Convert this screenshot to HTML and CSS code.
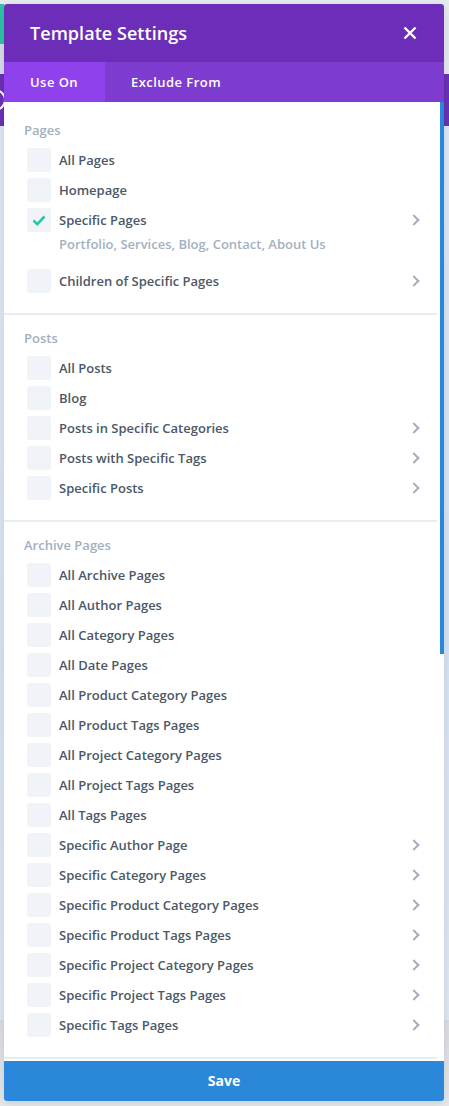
FILE: index.html
```html
<!DOCTYPE html>
<html lang="en">
<head>
<meta charset="utf-8">
<title>Template Settings</title>
<link rel="stylesheet" href="styles.css">
</head>
<body>
<div class="backdrop">
  <div class="bd-top"></div>
  <div class="bd-bar"><span class="bd-ring"></span></div>
  <div class="bd-main"></div>
  <div class="bd-foot"></div>
</div>

<div class="modal">
  <header class="modal-head">
    <h1 class="modal-title">Template Settings</h1>
    <button class="close" aria-label="Close">
      <svg width="14" height="14" viewBox="0 0 14 14"><path d="M1.5 1.5l11 11M12.5 1.5l-11 11" stroke="#fff" stroke-width="2.4" stroke-linecap="butt"/></svg>
    </button>
  </header>
  <nav class="tabs">
    <span class="tab active">Use On</span>
    <span class="tab">Exclude From</span>
  </nav>

  <div class="modal-body">
    <div class="content">
      <section class="group">
        <h2 class="group-label">Pages</h2>
        <ul class="options">
          <li class="option"><span class="box"></span><span class="name">All Pages</span></li>
          <li class="option"><span class="box"></span><span class="name">Homepage</span></li>
          <li class="option-wrap">
            <div class="option"><span class="box checked"><svg width="14" height="11" viewBox="0 0 14 11"><path d="M1.5 5.5l3.8 3.6L12.5 1.5" fill="none" stroke="#29c4a9" stroke-width="2.6"/></svg></span><span class="name">Specific Pages</span><span class="chev"></span></div>
            <div class="detail">Portfolio, Services, Blog, Contact, About Us</div>
          </li>
          <li class="option"><span class="box"></span><span class="name">Children of Specific Pages</span><span class="chev"></span></li>
        </ul>
      </section>

      <section class="group">
        <h2 class="group-label">Posts</h2>
        <ul class="options">
          <li class="option"><span class="box"></span><span class="name">All Posts</span></li>
          <li class="option"><span class="box"></span><span class="name">Blog</span></li>
          <li class="option"><span class="box"></span><span class="name">Posts in Specific Categories</span><span class="chev"></span></li>
          <li class="option"><span class="box"></span><span class="name">Posts with Specific Tags</span><span class="chev"></span></li>
          <li class="option"><span class="box"></span><span class="name">Specific Posts</span><span class="chev"></span></li>
        </ul>
      </section>

      <section class="group">
        <h2 class="group-label">Archive Pages</h2>
        <ul class="options">
          <li class="option"><span class="box"></span><span class="name">All Archive Pages</span></li>
          <li class="option"><span class="box"></span><span class="name">All Author Pages</span></li>
          <li class="option"><span class="box"></span><span class="name">All Category Pages</span></li>
          <li class="option"><span class="box"></span><span class="name">All Date Pages</span></li>
          <li class="option"><span class="box"></span><span class="name">All Product Category Pages</span></li>
          <li class="option"><span class="box"></span><span class="name">All Product Tags Pages</span></li>
          <li class="option"><span class="box"></span><span class="name">All Project Category Pages</span></li>
          <li class="option"><span class="box"></span><span class="name">All Project Tags Pages</span></li>
          <li class="option"><span class="box"></span><span class="name">All Tags Pages</span></li>
          <li class="option"><span class="box"></span><span class="name">Specific Author Page</span><span class="chev"></span></li>
          <li class="option"><span class="box"></span><span class="name">Specific Category Pages</span><span class="chev"></span></li>
          <li class="option"><span class="box"></span><span class="name">Specific Product Category Pages</span><span class="chev"></span></li>
          <li class="option"><span class="box"></span><span class="name">Specific Product Tags Pages</span><span class="chev"></span></li>
          <li class="option"><span class="box"></span><span class="name">Specific Project Category Pages</span><span class="chev"></span></li>
          <li class="option"><span class="box"></span><span class="name">Specific Project Tags Pages</span><span class="chev"></span></li>
          <li class="option"><span class="box"></span><span class="name">Specific Tags Pages</span><span class="chev"></span></li>
        </ul>
      </section>
    </div>
    <div class="scroll-track"><div class="scroll-thumb"></div></div>
  </div>

  <button class="save">Save</button>
</div>
</body>
</html>
```

FILE: styles.css
```css
* { box-sizing: border-box; }

html, body {
  margin: 0;
  padding: 0;
  width: 449px;
  height: 1106px;
  overflow: hidden;
}

body {
  position: relative;
  font-family: "Open Sans", "Noto Sans", sans-serif;
  background: #e4e8ec;
}

/* page underneath the dialog */
.backdrop {
  display: flex;
  flex-direction: column;
  height: 1106px;
}
.bd-top {
  height: 74px;
  background:
    linear-gradient(#2ec4a9, #2ec4a9) 0 4px / 4px 40px no-repeat,
    linear-gradient(#d8dee5, #d8dee5) 0 44px / 4px 30px no-repeat,
    #e8ebee;
}
.bd-bar {
  height: 52px;
  background: #6a31b6;
  overflow: hidden;
  display: flex;
  align-items: center;
}
.bd-ring {
  width: 22px;
  height: 22px;
  margin-left: -16px;
  border: 2px solid #fff;
  border-radius: 50%;
}
.bd-main {
  flex: 1;
  background: linear-gradient(#e0e9f4, #d7e4f3 60%, #dfe8f2);
}
.bd-foot {
  height: 86px;
  background: linear-gradient(#d9dde2, #e6e9ec);
}

/* dialog */
.modal {
  position: absolute;
  top: 4px;
  left: 4px;
  width: 440px;
  height: 1097px;
  display: flex;
  flex-direction: column;
  background: #fff;
  border-radius: 3px;
  overflow: hidden;
  box-shadow: 0 2px 10px rgba(0, 0, 0, 0.12);
}

.modal-head {
  height: 58px;
  flex: none;
  display: flex;
  align-items: center;
  justify-content: space-between;
  padding: 0 27px 0 26px;
  background: #6c2eb9;
}
.modal-title {
  margin: 0;
  font-size: 18px;
  font-weight: 600;
  color: #fff;
  letter-spacing: 0.05px;
}
.close {
  border: 0;
  padding: 0;
  background: none;
  width: 14px;
  height: 14px;
  display: flex;
}

.tabs {
  height: 40px;
  flex: none;
  display: flex;
  background: #7e3bd0;
}
.tab {
  display: flex;
  align-items: center;
  padding: 0 26px;
  font-size: 13px;
  font-weight: 600;
  letter-spacing: 0.45px;
  color: #fff;
}
.tab.active { background: #8f42ec; padding-right: 27px; }

.modal-body {
  flex: 1;
  display: flex;
  min-height: 0;
}
.content {
  flex: 1;
  padding-top: 5px;
  overflow: hidden;
}
.scroll-track {
  width: 4px;
  margin-left: 3px;
  flex: none;
}
.scroll-thumb {
  height: 552px;
  background: #2b87da;
}

.group {
  padding: 13px 0 20px;
  border-bottom: 2px solid #e7edf5;
}
.group-label {
  margin: 0 0 0 20px;
  font-size: 13px;
  line-height: 20px;
  font-weight: 600;
  color: #a2b0c1;
}
.options {
  list-style: none;
  margin: 8px 0 0;
  padding: 0 17px 0 23px;
  display: flex;
  flex-direction: column;
  gap: 6px;
}
.option {
  display: flex;
  align-items: center;
  height: 24px;
}
.box {
  width: 24px;
  height: 24px;
  flex: none;
  border-radius: 3px;
  background: #f0f4f9;
  display: flex;
  align-items: center;
  justify-content: center;
}
.box.checked svg { margin-top: 1px; margin-left: -1px; }
.name {
  flex: 1;
  margin-left: 8px;
  font-size: 13px;
  font-weight: 600;
  color: #4c5866;
}
.chev {
  width: 8px;
  height: 12px;
  flex: none;
  position: relative;
}
.chev::before {
  content: "";
  position: absolute;
  left: -2px;
  top: 2px;
  width: 6px;
  height: 6px;
  border-top: 2.5px solid #a3b0c0;
  border-right: 2.5px solid #a3b0c0;
  transform: rotate(45deg);
}
.detail {
  padding: 2px 0 9px 32px;
  font-size: 13px;
  line-height: 20px;
  font-weight: 600;
  color: #a3b1c2;
}

.save {
  height: 40px;
  flex: none;
  border: 0;
  padding: 0 0 2px;
  background: #2b87da;
  color: #fff;
  font-family: "Open Sans", "Noto Sans", sans-serif;
  font-size: 14px;
  font-weight: 700;
}
```
